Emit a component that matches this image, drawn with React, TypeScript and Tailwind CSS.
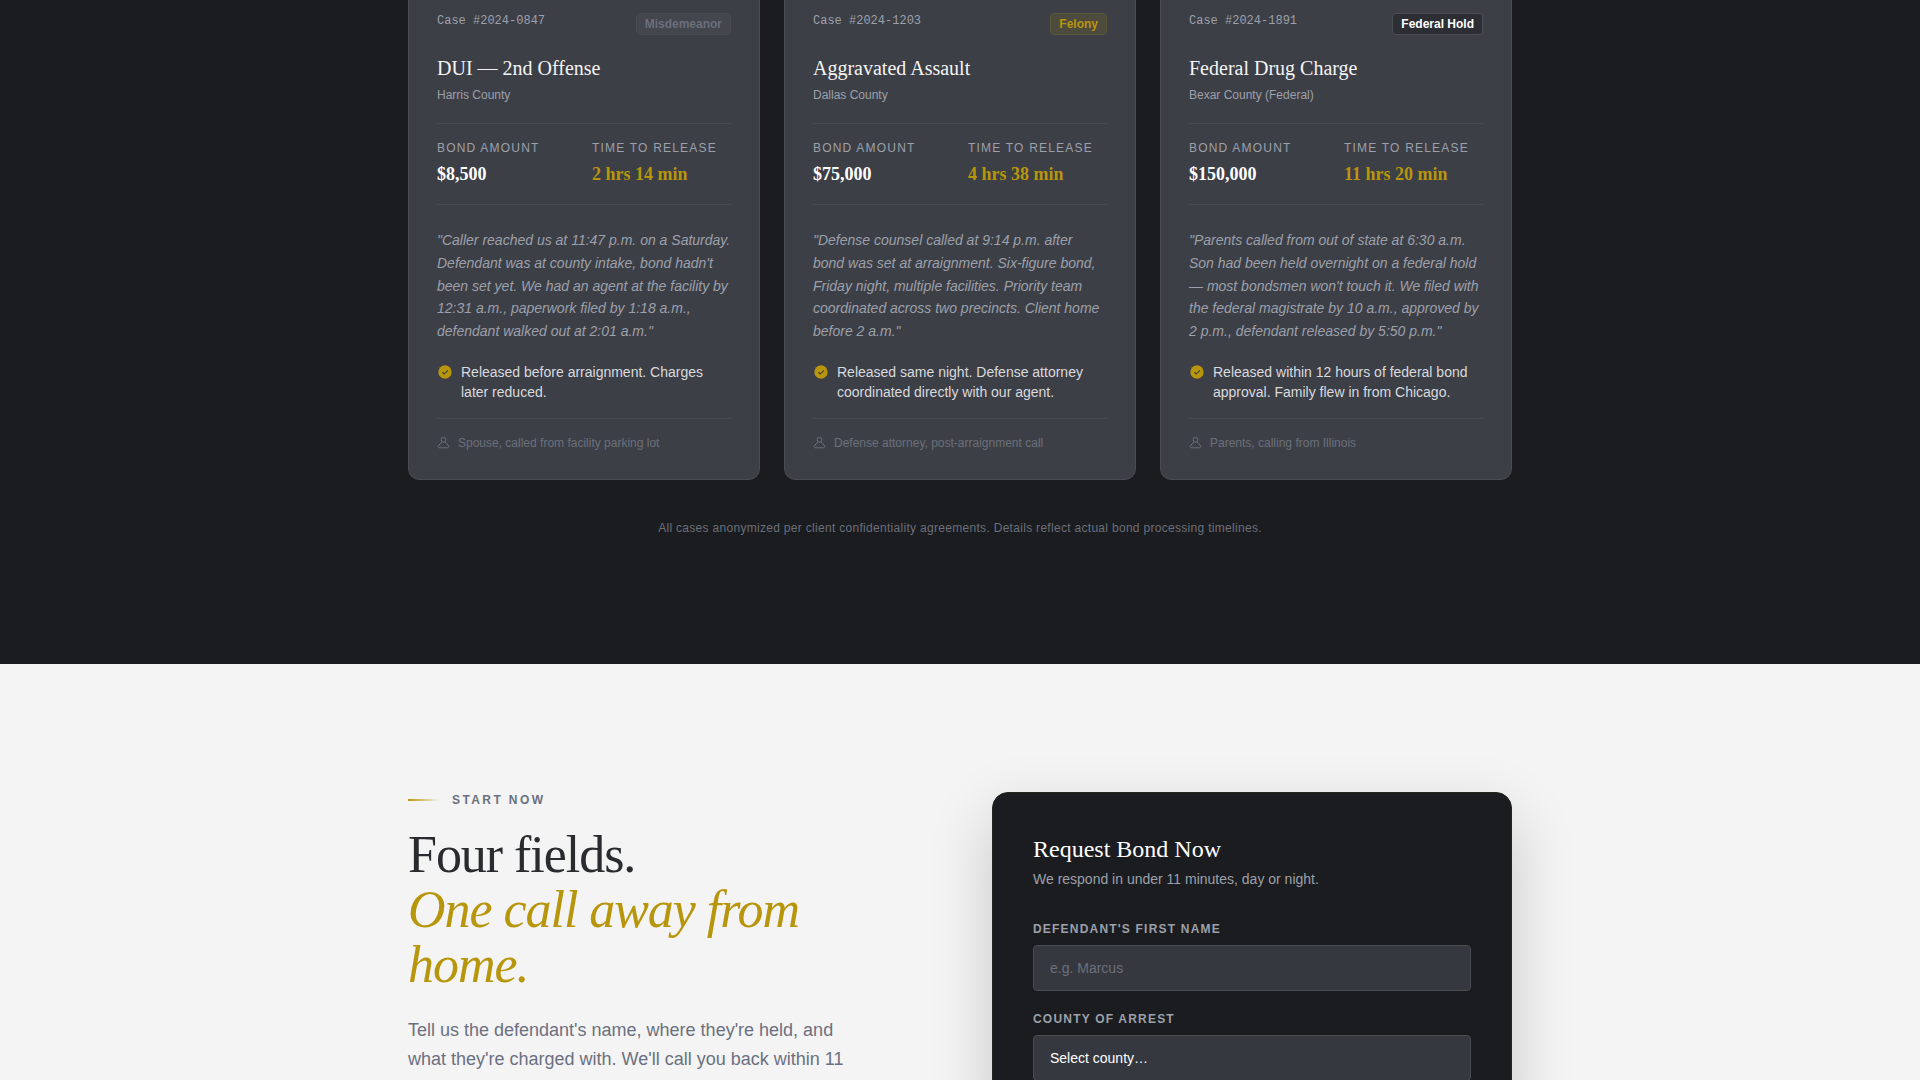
import { useState } from 'react'

type BadgeTone = 'muted' | 'gold' | 'dark'

interface CaseFile {
  id: string
  badge: string
  tone: BadgeTone
  charge: string
  county: string
  bond: string
  release: string
  quote: string
  outcome: string
  source: string
}

const CASES: CaseFile[] = [
  {
    id: '2024-0847',
    badge: 'Misdemeanor',
    tone: 'muted',
    charge: 'DUI — 2nd Offense',
    county: 'Harris County',
    bond: '$8,500',
    release: '2 hrs 14 min',
    quote:
      "Caller reached us at 11:47 p.m. on a Saturday. Defendant was at county intake, bond hadn't been set yet. We had an agent at the facility by 12:31 a.m., paperwork filed by 1:18 a.m., defendant walked out at 2:01 a.m.",
    outcome: 'Released before arraignment. Charges later reduced.',
    source: 'Spouse, called from facility parking lot',
  },
  {
    id: '2024-1203',
    badge: 'Felony',
    tone: 'gold',
    charge: 'Aggravated Assault',
    county: 'Dallas County',
    bond: '$75,000',
    release: '4 hrs 38 min',
    quote:
      'Defense counsel called at 9:14 p.m. after bond was set at arraignment. Six-figure bond, Friday night, multiple facilities. Priority team coordinated across two precincts. Client home before 2 a.m.',
    outcome: 'Released same night. Defense attorney coordinated directly with our agent.',
    source: 'Defense attorney, post-arraignment call',
  },
  {
    id: '2024-1891',
    badge: 'Federal Hold',
    tone: 'dark',
    charge: 'Federal Drug Charge',
    county: 'Bexar County (Federal)',
    bond: '$150,000',
    release: '11 hrs 20 min',
    quote:
      "Parents called from out of state at 6:30 a.m. Son had been held overnight on a federal hold — most bondsmen won't touch it. We filed with the federal magistrate by 10 a.m., approved by 2 p.m., defendant released by 5:50 p.m.",
    outcome: 'Released within 12 hours of federal bond approval. Family flew in from Chicago.',
    source: 'Parents, calling from Illinois',
  },
]

const COUNTIES = ['Harris', 'Dallas', 'Bexar']

function getBadgeClass(tone: BadgeTone) {
  switch (tone) {
    case 'gold': return 'bg-[#4d4b3d] border-[#5b5637] text-[#b8960c]'
    case 'dark': return 'bg-[#2c2e33] border-[#4b4d54] text-white'
    default: return 'bg-[#43464d] border-[#484b52] text-[#6b6f7a]'
  }
}

function CheckIcon() {
  return (
    <svg viewBox="0 0 24 24" className="mt-0.5 w-4 h-4 flex-shrink-0" aria-hidden="true">
      <circle cx="12" cy="12" r="10" fill="#b8960c" />
      <path d="M8.5 12.5l2.5 2.500 5-5.200" fill="none" stroke="#3d3f47" strokeWidth="1.6" strokeLinecap="round" strokeLinejoin="round" />
    </svg>
  )
}

function PersonIcon() {
  return (
    <svg viewBox="0 0 24 24" className="w-[13px] h-[13px] flex-shrink-0" fill="none" stroke="currentColor" strokeWidth="1.8" aria-hidden="true">
      <circle cx="12" cy="7" r="4.500" />
      <path d="M9 11.500c0 2.500-6.500 3.500-6.500 8 0 1.300.9 2.300 2.400 2.300h14.200c1.500 0 2.400-1 2.400-2.300 0-4.500-6.500-5.500-6.500-8" strokeLinecap="round" />
    </svg>
  )
}

function CaseCard({ item }: { item: CaseFile }) {
  return (
    <article className="flex flex-col rounded-b-xl border border-t-0 border-[#4a4c52] bg-[#3d3f47] px-7 pt-[13px] pb-7">
      <div className="flex items-start justify-between">
        <span className="font-['Liberation_Mono',monospace] text-xs text-[#9ca0aa]">Case #{item.id}</span>
        <span className={`rounded-sm border px-2 py-0.5 text-xs font-bold ${getBadgeClass(item.tone)}`}>{item.badge}</span>
      </div>

      <h3 className="mt-5 font-['Liberation_Serif',serif] text-xl leading-[26px] text-[#f4f4f5]">{item.charge}</h3>
      <p className="mt-1.5 text-xs text-[#9ca0aa]">{item.county}</p>

      <dl className="mt-5 grid grid-cols-2 gap-4 border-y border-[#474950] py-4">
        <div>
          <dt className="text-xs tracking-widest uppercase text-[#9ca0aa]">Bond Amount</dt>
          <dd className="mt-1 font-['Liberation_Serif',serif] text-lg font-bold text-white">{item.bond}</dd>
        </div>
        <div>
          <dt className="text-xs tracking-widest uppercase text-[#9ca0aa]">Time to Release</dt>
          <dd className="mt-1 font-['Liberation_Serif',serif] text-lg font-bold text-[#b8960c]">{item.release}</dd>
        </div>
      </dl>

      <blockquote className="mt-6 flex-1 text-sm leading-relaxed italic text-[#9ca0aa]">{`"${item.quote}"`}</blockquote>

      <div className="mt-[19px] flex items-start gap-2">
        <CheckIcon />
        <p className="text-sm text-[#d9dadd]">{item.outcome}</p>
      </div>

      <div className="mt-4 flex items-center gap-2 border-t border-[#474950] pt-4 text-xs text-[#6b6f7a]">
        <PersonIcon />
        {item.source}
      </div>
    </article>
  )
}

function RequestForm() {
  const [name, setName] = useState('')
  const [county, setCounty] = useState('')
  const labelClass = 'block text-xs font-bold tracking-widest uppercase text-[#9ca0aa]'
  const fieldClass = 'mt-2 block w-full appearance-none rounded-sm border border-[#4a4c54] bg-[#363840] px-4 py-3 text-sm text-white placeholder:text-[#6b6f7a]'

  return (
    <form className="rounded-2xl border border-[#25261f] bg-[#1b1c1f] p-10 shadow-[0_24px_64px_rgba(0,0,0,0.18)]">
      <h3 className="font-['Liberation_Serif',serif] text-2xl text-white">Request Bond Now</h3>
      <p className="mt-1 text-sm text-[#9ca0aa]">We respond in under 11 minutes, day or night.</p>

      <div className="mt-8">
        <label htmlFor="first-name" className={labelClass}>Defendant's First Name</label>
        <input
          id="first-name"
          type="text"
          placeholder="e.g. Marcus"
          value={name}
          onChange={e => setName(e.target.value)}
          className={fieldClass}
        />
      </div>

      <div className="mt-5">
        <label htmlFor="county" className={labelClass}>County of Arrest</label>
        <select id="county" value={county} onChange={e => setCounty(e.target.value)} className={fieldClass}>
          <option value="">Select county…</option>
          {COUNTIES.map(c => (
            <option key={c} value={c}>{c}</option>
          ))}
        </select>
      </div>
    </form>
  )
}

export default function App() {
  return (
    <main className="min-h-screen bg-[#f4f4f4] font-['Liberation_Sans',sans-serif]">
      <section className="bg-[#1b1c1f] pb-32">
        <div className="mx-auto max-w-[1200px] px-12">
          <div className="grid grid-cols-3 gap-6">
            {CASES.map(item => (
              <CaseCard key={item.id} item={item} />
            ))}
          </div>
          <p className="mt-10 text-center text-xs tracking-wide text-[#6b6f7a]">
            All cases anonymized per client confidentiality agreements. Details reflect actual bond processing timelines.
          </p>
        </div>
      </section>

      <section className="py-32">
        <div className="mx-auto grid max-w-[1200px] grid-cols-2 gap-16 px-12">
          <div>
            <div className="flex items-center gap-3">
              <span className="h-0.5 w-8 bg-linear-to-r from-[#b8960c] to-transparent" />
              <span className="text-xs font-bold tracking-[0.2em] uppercase text-[#6b7080]">Start Now</span>
            </div>
            <h2 className="mt-[19px] font-['Liberation_Serif',serif] text-[52px] leading-[55px] tracking-[-0.02em] text-[#2a2b2f]">
              Four fields.
              <em className="block text-[#b8960c]">One call away from home.</em>
            </h2>
            <p className="mt-6 max-w-md text-lg leading-relaxed text-[#6b7080]">
              Tell us the defendant's name, where they're held, and what they're charged with. We'll call you back within 11 minutes.
            </p>
          </div>
          <RequestForm />
        </div>
      </section>
    </main>
  )
}
